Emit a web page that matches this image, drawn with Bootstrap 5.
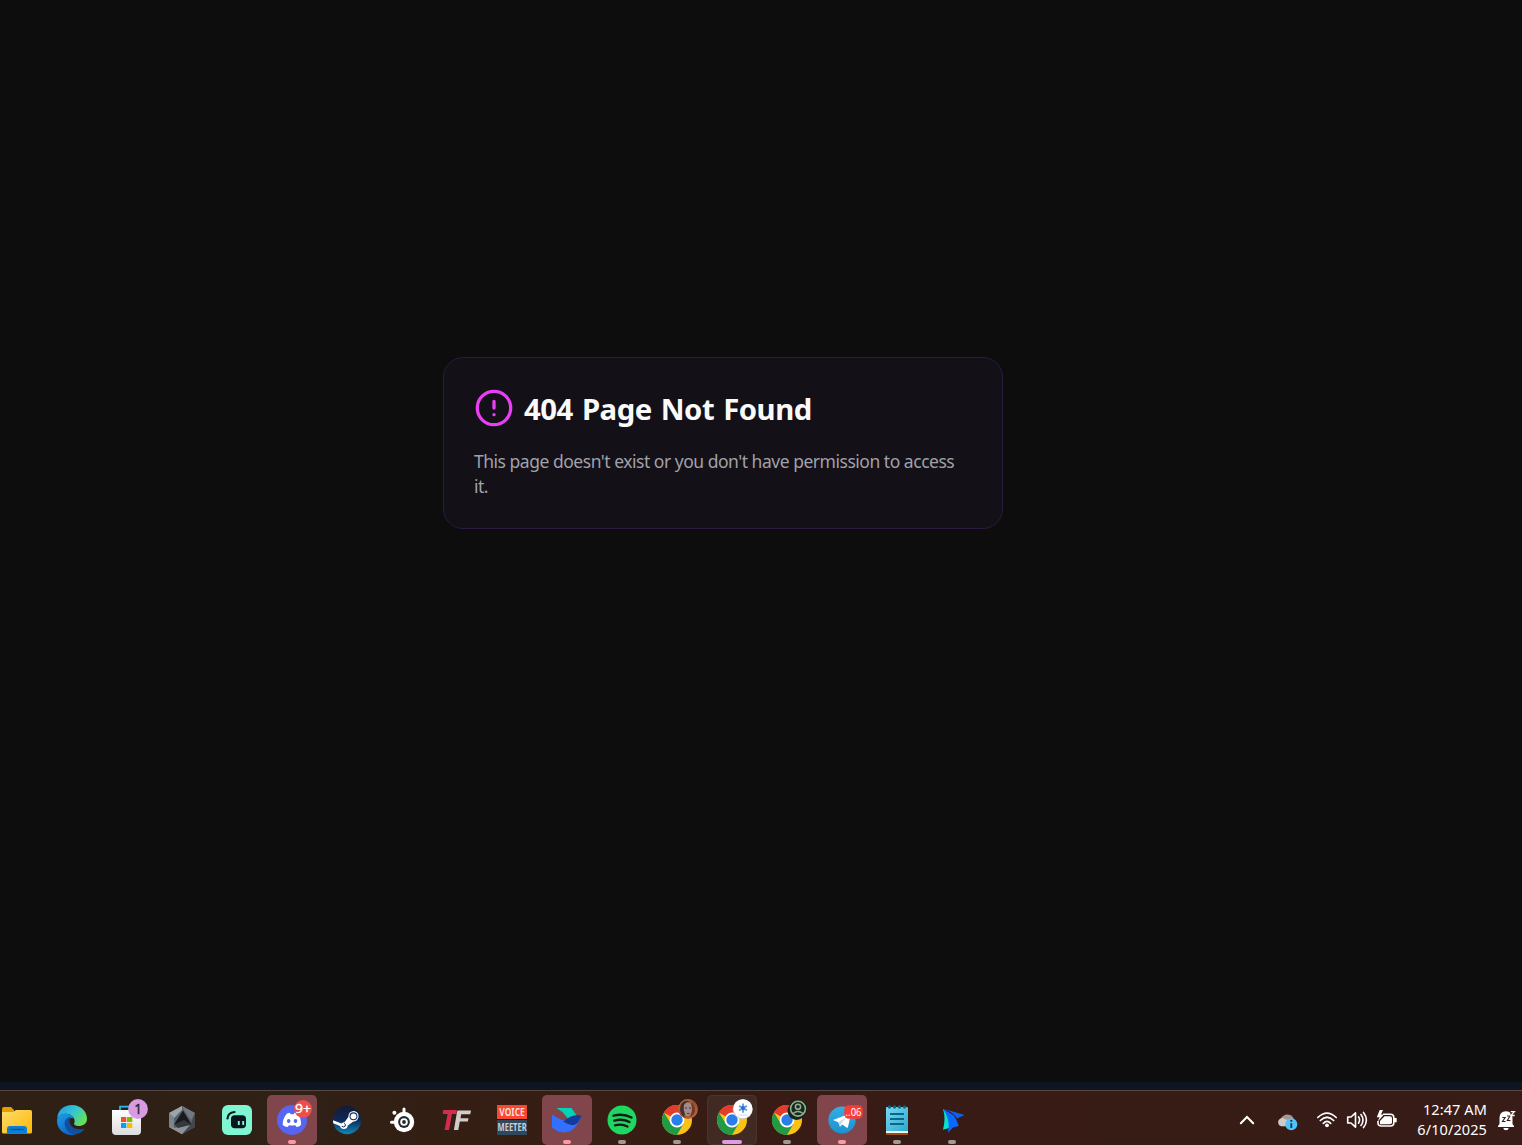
<!DOCTYPE html>
<html lang="en">
<head>
<meta charset="utf-8">
<meta name="viewport" content="width=device-width, initial-scale=1">
<title>404 Page Not Found</title>
<link href="https://cdn.jsdelivr.net/npm/bootstrap@5.3.0/dist/css/bootstrap.min.css" rel="stylesheet">
<style>
body{background:#0d0d0d;font-family:"Noto Sans","Open Sans",sans-serif}
.stage{padding:0 76px 196px 0}
.notice{width:560px;height:172px;background:#141017;border:1px solid #2c1a41;border-radius:20px;padding:30px}
.notice-head{height:40px;gap:10px}
.notice-head h1{font-size:29.3px;line-height:40px;letter-spacing:-.5px;word-spacing:2px;color:#fafafa;white-space:nowrap;padding-top:2px}
.notice p{font-size:17.5px;line-height:25px;letter-spacing:-.48px;color:#a1a1aa;margin-top:21px}
.edge-strip{height:8px;background:#101522}
.taskbar{height:55px;border-top:1px solid #574740;background:linear-gradient(90deg,#2e2015 0,#302015 300px,#371d14 570px,#381b14 900px,#371c17 1522px);padding-top:4px}
.apps{gap:5px;margin-left:-8px}
.app{width:50px;height:50px;border-radius:5px}
.app svg,.tray svg{display:block}
.app.alerting{background:#81464b}
.app.current{background:#412a23;box-shadow:inset 0 0 0 1px #4a332b}
.clock{font-size:14.5px;line-height:20px;letter-spacing:.1px;color:#fff;width:90px;text-align:right}
svg text{font-family:"Noto Sans","Open Sans",sans-serif}
</style>
<script src="https://cdn.jsdelivr.net/npm/bootstrap@5.3.0/dist/js/bootstrap.bundle.min.js"></script>
</head>
<body class="vh-100 d-flex flex-column overflow-hidden">
<svg width="0" height="0" class="position-absolute" aria-hidden="true">
<defs>
<linearGradient id="gFolder" x1="0" y1="0" x2="1" y2="1"><stop stop-color="#ffdc6e"/><stop offset="1" stop-color="#fdb800"/></linearGradient>
<linearGradient id="gEdgeTop" x1="0" y1="0.2" x2="1" y2=".7"><stop stop-color="#239fe2"/><stop offset=".5" stop-color="#35c5d0"/><stop offset="1" stop-color="#6be34a"/></linearGradient>
<linearGradient id="gEdgeLeft" x1="0" y1="0" x2=".6" y2="1"><stop stop-color="#1ca0e8"/><stop offset="1" stop-color="#0f62c4"/></linearGradient>
<linearGradient id="gBag" x1="0" y1="0" x2="0" y2="1"><stop stop-color="#fff"/><stop offset="1" stop-color="#dcdcdc"/></linearGradient>
<linearGradient id="gSteam" x1="0" y1="0" x2="0" y2="1"><stop stop-color="#141a36"/><stop offset=".5" stop-color="#0d2956"/><stop offset="1" stop-color="#1088b8"/></linearGradient>
<linearGradient id="gNote" x1="0" y1="0" x2="1" y2="1"><stop stop-color="#78d8f2"/><stop offset="1" stop-color="#2fa9cb"/></linearGradient>
<linearGradient id="gTele" x1="0" y1="0" x2="0" y2="1"><stop stop-color="#36aee2"/><stop offset="1" stop-color="#1b92d0"/></linearGradient>
<linearGradient id="gFace" x1="0" y1="0" x2="1" y2="1"><stop stop-color="#e07a35"/><stop offset=".5" stop-color="#8c4c3c"/><stop offset="1" stop-color="#d0703c"/></linearGradient>
<symbol id="chrome" viewBox="0 0 50 50">
<circle cx="25" cy="25" r="15" fill="#fbc116"/>
<path d="M25 25L12 17.5A15 15 0 0 1 38 17.5L25 18Z" fill="#e33b2e"/>
<path d="M12 17.5A15 15 0 0 0 25 40L31.5 28.8 19 29Z" fill="#229a46"/>
<path d="M12 17.5A15 15 0 0 1 38 17.5H25L19 21Z" fill="#e33b2e"/>
<circle cx="25" cy="25" r="7.4" fill="#fff"/><circle cx="25" cy="25" r="5.7" fill="#2b7de9"/>
</symbol>
</defs>
</svg>

<main class="stage flex-grow-1 d-flex align-items-center justify-content-center">
<section class="notice">
<div class="notice-head d-flex align-items-center">
<svg width="40" height="40" viewBox="0 0 40 40" fill="none" stroke="#e83ff2" stroke-width="3.3" stroke-linecap="round"><circle cx="20" cy="20" r="16.7"/><path d="M20 13.300V20M20 26.600V26.650"/></svg>
<h1 class="fw-bold mb-0">404 Page Not Found</h1>
</div>
<p class="mb-0">This page doesn't exist or you don't have permission to access it.</p>
</section>
</main>
<div class="edge-strip flex-shrink-0"></div>
<footer class="taskbar flex-shrink-0 d-flex justify-content-between">
<nav class="apps d-flex" aria-label="Applications">
<div class="app"><svg width="50" height="50"><path d="M10 14Q10 12 12 12H19L22 15V20H10Z" fill="#e39f00"/><path d="M10 17H21L24 15H38.500Q40 15 40 17V37Q40 38.500 38.500 38.500H11.500Q10 38.500 10 37Z" fill="url(#gFolder)"/><path d="M15 38.500V34Q15 31 18 31H32Q35 31 35 34V38.500Z" fill="#0b7fd6"/><path d="M18.500 34.500H31.500" stroke="#064f94" stroke-width="1.300"/></svg></div>
<div class="app"><svg width="50" height="50"><path d="M10.200 23C11 15 17 10 25 10C34 10 40 16.500 40 23.500C40 29 36 31 31.500 31C28.500 31 27 30 27 28.500C28 27 28 25 26.500 22.500C23 17.500 15 17 10.200 23Z" fill="url(#gEdgeTop)"/><path d="M10 25C11 18 23 16 27 23.500C24 21.500 18.500 24.500 19 30C19.500 35.500 24 39 29 39.500C18 42.500 9.500 34 10 25Z" fill="url(#gEdgeLeft)"/><path d="M24 22.300C19.500 22 17 26 17.800 30C19 36.500 25 40 30 39C33.500 38.200 36.300 36 38 33.500C32 36 22.500 33 22.500 26C22.500 24.500 23 23.200 24 22.300Z" fill="#124f9e"/></svg></div>
<div class="app"><svg width="50" height="50"><path d="M18 17V11.700H32V17" fill="none" stroke="#24bdf0" stroke-width="1.700"/><path d="M10 15H39V36Q39 40 35 40H14Q10 40 10 36Z" fill="url(#gBag)"/><path d="M19 22H24.300V27H19Z" fill="#f25022"/><path d="M25 22H30.300V27H25Z" fill="#7fba00"/><path d="M19 28H24.300V33H19Z" fill="#00a4ef"/><path d="M25 28H30.300V33H25Z" fill="#ffb900"/><circle cx="36" cy="14" r="9.900" fill="#d89be2"/><text x="36" y="18.700" text-anchor="middle" font-size="13.500" fill="#222" stroke="#222" stroke-width=".3">1</text></svg></div>
<div class="app"><svg width="50" height="50"><path d="M25 11L38 18V32L25 39.300L12 32V18Z" fill="#5b6168"/><path d="M25 11L12 18L17 23L25 15Z" fill="#9da5ac"/><path d="M12 18L17 23V34.500L12 32Z" fill="#7c858c"/><path d="M25 11L38 18L34 25L27 15Z" fill="#727980"/><path d="M12 32L25 39.300L34 30L17 33Z" fill="#8c9298"/><path d="M38 18V32L25 39.300L34 29Z" fill="#42474d"/><path d="M26 15.500L34.500 29.500L17 29.500Z" fill="#171a1e"/><path d="M17 29.500L27 25L34.500 29.500L21 33Z" fill="#34383d"/></svg></div>
<div class="app"><svg width="50" height="50"><rect x="10" y="10" width="30" height="30" rx="6" fill="#80f5d2"/><path d="M15.500 23.500Q16 17.500 22.500 17" fill="none" stroke="#09161d" stroke-width="2.200" stroke-linecap="round"/><rect x="19" y="20.300" width="15" height="13" rx="3.700" fill="#09161d"/><path d="M26.800 26V30M31.200 26V30" stroke="#80f5d2" stroke-width="1.900"/></svg></div>
<div class="app alerting"><svg width="50" height="50"><circle cx="25" cy="25" r="15" fill="#5865f2"/><path d="M20 18.500L23 17.800L23.700 19.200H26.700L27.500 17.800L31 18.700Q34.500 24 34 30Q32 32 29.500 32L28.300 30.200Q25 31 22 30.200L20.700 32Q18 31.800 15.700 30Q15.500 23.500 20 18.500Z" fill="#fff"/><ellipse cx="21.700" cy="26" rx="1.800" ry="2.100" fill="#5865f2"/><ellipse cx="28.500" cy="26" rx="1.800" ry="2.100" fill="#5865f2"/><circle cx="36" cy="14" r="8.900" fill="#ed4e4c"/><text x="28" y="18.300" font-size="13" fill="#fff" stroke="#fff" stroke-width=".3" textLength="16" lengthAdjust="spacingAndGlyphs">9+</text><rect x="21" y="45" width="8" height="4" rx="2" fill="#ff98a5"/></svg></div>
<div class="app"><svg width="50" height="50"><circle cx="25" cy="25" r="14.200" fill="url(#gSteam)"/><path d="M11 25.300L19.500 28.400Q21 27.300 22.500 27.300L26.300 22Q26.500 16 32 16Q37 17 36.500 22Q35.500 26.500 31 26.700L25.800 30.500Q25.300 34 21.800 34Q18.700 34 18 31L11.200 28.300Z" fill="#fff"/><circle cx="31.500" cy="21.300" r="4" fill="#16325c"/><circle cx="31.500" cy="21.300" r="2.900" fill="#fff"/><path d="M19.700 31.200Q21.500 32.700 23.200 31.200Q24.300 29.200 22 28.300" fill="none" stroke="#16325c" stroke-width="1"/></svg></div>
<div class="app"><svg width="50" height="50"><path d="M27 19V14M19 27.200H14.500" stroke="#fff" stroke-width="3" stroke-linecap="round"/><circle cx="17.400" cy="17.700" r="2" fill="#fff"/><circle cx="27" cy="27" r="10.200" fill="#fff"/><circle cx="27" cy="27" r="5.900" fill="#242a31"/><circle cx="27" cy="27" r="3.800" fill="#fff"/><circle cx="27" cy="27" r="1.900" fill="#242a31"/></svg></div>
<div class="app"><svg width="50" height="50"><path d="M11.300 15H25L24.300 19H20L17 35H12.600L15.600 19H10.700Z" fill="#d22d4c"/><path d="M26 15.500H39L38.300 19.200H29.200L28.500 23.200H36.500L35.800 26.600H27.800L26.300 35H21.900L25 17Q25.200 15.600 26 15.500Z" fill="#d0ccca"/></svg></div>
<div class="app"><svg width="50" height="50"><rect x="10" y="10" width="30" height="14" fill="#fc4730"/><rect x="10" y="24" width="30" height="1" fill="#14100e"/><rect x="10" y="25" width="30" height="15" fill="#31475b"/><text x="12.300" y="20.700" font-size="10" font-weight="700" fill="#f2ded8" textLength="25.500" lengthAdjust="spacingAndGlyphs">VOICE</text><text x="10.600" y="35.800" font-size="10" font-weight="700" fill="#cad1d6" textLength="29" lengthAdjust="spacingAndGlyphs">MEETER</text></svg></div>
<div class="app alerting"><svg width="50" height="50"><path d="M14.500 13H29.500L35 21L28 26L20.500 17Z" fill="#04d1b6"/><path d="M10 19.500Q19 26 25 25.500Q31 36 24 37Q15 38 10 32Z" fill="#3370ff"/><path d="M23 27Q29 18.500 40 20.500L36 28Q31 37 24 37Q18 38 13 34.500L24 31Z" fill="#3370ff"/><path d="M21 27Q30 18.500 40 20.500L36 27.500Q31 33 22 27Z" fill="#133c9a"/><rect x="21" y="45" width="8" height="4" rx="2" fill="#ff98a5"/></svg></div>
<div class="app"><svg width="50" height="50"><circle cx="25" cy="25" r="14.500" fill="#1fd760"/><path d="M16.500 20.700Q26.500 18.200 34.500 22.500M17.300 25.600Q25.500 23.300 32.500 27M18 30.300Q25 28.500 30.500 31.500" fill="none" stroke="#141c15" stroke-width="2.400" stroke-linecap="round"/><rect x="21" y="45" width="8" height="4" rx="2" fill="#a29792"/></svg></div>
<div class="app"><svg width="50" height="50"><use href="#chrome" width="50" height="50"/><circle cx="36" cy="14" r="9.900" fill="url(#gFace)"/><path d="M29 9Q32 5 37 6L33 18L32 22Q26 17 29 9Z" fill="#43332f"/><path d="M32 10Q35 5 39 9Q41 15 38 20Q35 23 33 19Q31 15 32 10Z" fill="#a18c8b"/><path d="M33 13H35M37 13H39M35 18.500H37.500" stroke="#4b3034" stroke-width="1.200"/><path d="M39 8Q42 14 38 22Q43 20 43 15Q42 9 39 8Z" fill="#78341f"/><rect x="21" y="45" width="8" height="4" rx="2" fill="#a29792"/></svg></div>
<div class="app current"><svg width="50" height="50"><use href="#chrome" width="50" height="50"/><circle cx="35.700" cy="14.300" r="10" fill="#b7c3ca"/><circle cx="35.900" cy="13.800" r="9.500" fill="#fff"/><path d="M36 8.500V17.700M32 10.800L40 15.400M32 15.400L40 10.800" stroke="#6ca5e5" stroke-width="2"/><circle cx="36" cy="13.100" r="2" fill="#326fc7"/><path d="M31.500 20H40.500" stroke="#d0e2f0" stroke-width="1.200"/><rect x="15" y="45" width="20" height="4" rx="2" fill="#dc9be2"/></svg></div>
<div class="app"><svg width="50" height="50"><use href="#chrome" width="50" height="50"/><circle cx="34.500" cy="16" r="9" fill="#17271e"/><circle cx="36" cy="13.800" r="9.400" fill="#17271e"/><g fill="none" stroke="#91ad8f" stroke-width="1.600"><circle cx="36" cy="13.700" r="7.400"/><circle cx="36" cy="11.800" r="2.600"/><path d="M31 18.500Q36 14.500 41 18.500"/></g><rect x="21" y="45" width="8" height="4" rx="2" fill="#a29792"/></svg></div>
<div class="app alerting"><svg width="50" height="50"><circle cx="25" cy="25" r="13.600" fill="url(#gTele)"/><path d="M16 25L33 18.500Q34 18.300 33.700 20L31 32Q30.700 33.300 29.500 32.500L25.300 29.500L23 31.800L21.300 27.300Z" fill="#fff"/><path d="M21.300 27.300L30 21.700L24.200 28.300L23 31.800Z" fill="#c7dce9"/><rect x="27.300" y="10.300" width="18.400" height="13.500" rx="4.500" fill="#fb3b38"/><text x="28.600" y="21" font-size="11" fill="#fff" textLength="15.800" lengthAdjust="spacingAndGlyphs">..06</text><rect x="21" y="45" width="8" height="4" rx="2" fill="#ff98a5"/></svg></div>
<div class="app"><svg width="50" height="50"><rect x="14" y="34" width="22" height="6" rx="1" fill="#9c500d"/><rect x="14" y="32" width="22" height="6" fill="#f1f1ef"/><path d="M15 12H35Q36 12 36 13V36H14V13Q14 12 15 12Z" fill="url(#gNote)"/><path d="M18 19H32M18 24H32M18 29H32" stroke="#06688d" stroke-width="1.800"/><g fill="#0b6988"><circle cx="17.500" cy="12" r="1.700"/><circle cx="22.500" cy="12" r="1.700"/><circle cx="27.500" cy="12" r="1.700"/><circle cx="32.500" cy="12" r="1.700"/></g><rect x="21" y="45" width="8" height="4" rx="2" fill="#a29792"/></svg></div>
<div class="app"><svg width="50" height="50"><path d="M16 14Q19 23 16 34.700L22 33Q24 25 19 16Z" fill="#07e2cc"/><path d="M16 13.700L27 20.500Q30 25 31.800 31L26 32.500L21 37.700Q24 25 16 13.700Z" fill="#0868ff"/><path d="M18 14.300L37.700 20L30 23.500Q27 18 18 14.300Z" fill="#0a62f4"/><rect x="21" y="45" width="8" height="4" rx="2" fill="#a29792"/></svg></div>
</nav>
<div class="tray d-flex">
<svg width="50" height="50" viewBox="1222 1095 50 50"><path d="M1240.800 1123.300L1247 1117L1253.200 1123.300" fill="none" stroke="#fff" stroke-width="2" stroke-linecap="round"/></svg>
<svg width="38" height="50" viewBox="1272 1095 38 50"><path d="M1281 1123A5.500 5.500 0 0 1 1284 1115.500A6.500 6.500 0 0 1 1294 1120L1287 1124Z" fill="#a59692"/><path d="M1281 1126.300A4.200 4.200 0 0 1 1280.500 1118.500Q1283.500 1117.300 1286 1119.800Q1294 1118 1294.500 1126.300Z" fill="#d0cac8"/><circle cx="1291.300" cy="1124.300" r="6" fill="#50c4fa"/><path d="M1291.300 1123.300V1128M1291.300 1120V1121.700" stroke="#08354d" stroke-width="1.800"/></svg>
<svg width="30" height="50" viewBox="1310 1095 30 50"><g fill="none" stroke="#fff" stroke-width="1.700" stroke-linecap="round"><path d="M1317.800 1117.500Q1327 1108.700 1336.200 1117.500M1320.300 1120.500Q1327 1114 1333.700 1120.500M1323.300 1123.300Q1327 1119.500 1330.700 1123.300"/></g><circle cx="1327" cy="1125.300" r="1.900" fill="#fff"/></svg>
<svg width="32" height="50" viewBox="1340 1095 32 50" fill="none" stroke="#fff" stroke-width="1.600" stroke-linecap="round" stroke-linejoin="round"><path d="M1347.700 1117H1351L1355.500 1112.800V1127.200L1351 1123H1347.700ZM1358.500 1116.800Q1360.700 1120 1358.500 1123.200M1361 1114.500Q1365 1120 1361 1125.500M1363.500 1112.400Q1369.300 1120 1363.500 1127.600"/></svg>
<svg width="25" height="50" viewBox="1372 1095 25 50"><path d="M1383 1114.300H1390.500Q1393.800 1114.300 1393.800 1117.500V1123Q1393.800 1126 1390.500 1126H1381.500Q1378 1126 1378 1123V1121" fill="none" stroke="#fff" stroke-width="1.600"/><path d="M1384.500 1116.300H1390Q1392 1116.300 1392 1118.500V1122.300Q1392 1124.200 1390 1124.200H1380V1121Z" fill="#fff"/><path d="M1395.200 1118V1122.300" stroke="#fff" stroke-width="3"/><path d="M1379.700 1110L1376.800 1117.300H1379.500L1377.500 1121.700L1384 1114.500H1381L1383 1110Z" fill="#fff"/></svg>
<div class="clock pt-1"><div>12:47 AM</div><div>6/10/2025</div></div>
<svg width="35" height="50" viewBox="1487 1095 35 50"><path d="M1499.500 1124V1118Q1499.500 1111.500 1506 1111.300Q1512.500 1111.800 1512.500 1118V1124L1514 1126V1127H1498V1126ZM1503.300 1128H1508.700Q1508.500 1130.300 1506 1130.300Q1503.500 1130.300 1503.300 1128Z" fill="#fff"/><g fill="none" stroke="#371c17" stroke-width="1.100"><path d="M1502.300 1117.500H1505.200L1502.500 1121.500H1505.600M1507 1116H1510L1507.300 1120.500H1510.500"/></g><path d="M1509.700 1110.500H1516V1116H1511Z" fill="#371c17"/><path d="M1510.700 1111.700H1514.300L1510.900 1115.500H1514.700" fill="none" stroke="#fff" stroke-width="1.300"/></svg>
</div>
</footer>
</body>
</html>
